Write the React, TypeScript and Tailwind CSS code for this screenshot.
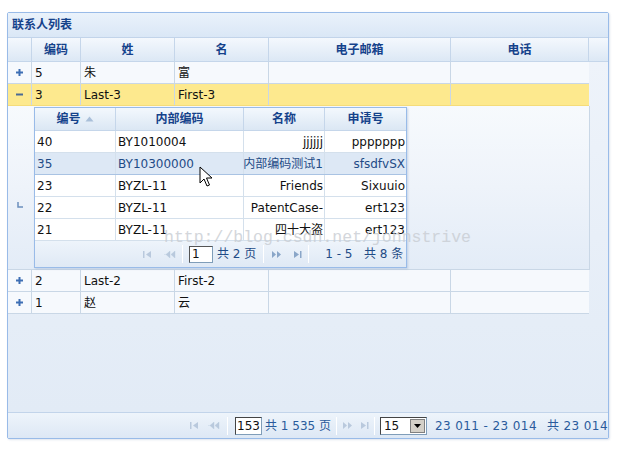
import React from 'react';

const FONT = { fontFamily: '"DejaVu Sans", Verdana, "Noto Sans CJK SC", sans-serif' };

const COLS = [24, 49, 94, 94, 182, 138];
const HEAD = ['', '编码', '姓', '名', '电子邮箱', '电话'];

const SUB_COLS = [81, 128, 81, 81];
const SUB_ROWS = [
  ['40', 'BY1010004', 'jjjjjj', 'ppppppp'],
  ['35', 'BY10300000', '内部编码测试1', 'sfsdfvSX'],
  ['23', 'BYZL-11', 'Friends', 'Sixuuio'],
  ['22', 'BYZL-11', 'PatentCase-', 'ert123'],
  ['21', 'BYZL-11', '四十大盗', 'ert123'],
];

function Plus() {
  return (
    <svg width="9" height="9" viewBox="0 0 9 9">
      <path d="M4.5 1v7M1 4.5h7" stroke="#3d6eb4" strokeWidth="2" />
    </svg>
  );
}

function Minus() {
  return (
    <svg width="9" height="9" viewBox="0 0 9 9">
      <path d="M1 4.5h7" stroke="#4a6a94" strokeWidth="2" />
    </svg>
  );
}

function NavIcons({ dir, faded, gap }: { dir: 'first' | 'last'; faded?: boolean; gap: string }) {
  const c = faded ? '#b9c9dd' : '#8aa6c8';
  return dir === 'first' ? (
    <div className={`flex items-center ${gap}`}>
      <svg width="9" height="7" viewBox="0 0 9 7">
        <rect x="0" y="0" width="1.5" height="7" fill={c} />
        <path d="M8 0v7L3 3.5z" fill={c} />
      </svg>
      <svg width="12" height="7" viewBox="0 0 12 7">
        <path d="M0 3.5h4M6 0v7L2 3.5zM11 0v7L7 3.5z" fill={c} stroke={c} strokeWidth="0.4" />
      </svg>
    </div>
  ) : (
    <div className={`flex items-center ${gap}`}>
      <svg width="12" height="7" viewBox="0 0 12 7">
        <path d="M1 0v7l4-3.5zM6 0v7l4-3.5z" fill={c} />
      </svg>
      <svg width="9" height="7" viewBox="0 0 9 7">
        <path d="M1 0v7l5-3.5z" fill={c} />
        <rect x="7" y="0" width="1.5" height="7" fill={c} />
      </svg>
    </div>
  );
}

function Sep({ m }: { m: string }) {
  return <div className={`w-px h-[18px] bg-[#c9d6e6] border-r border-white shrink-0 ${m}`} />;
}

function HeaderCell({ w, text, last }: { w: number; text: string; last?: boolean }) {
  return (
    <div
      className={`h-full flex items-center justify-center shrink-0 font-bold text-[12px] text-[#15428b] ${last ? '' : 'border-r border-[#c5d6ea]'}`}
      style={{ width: w }}
    >
      {text}
    </div>
  );
}

function OuterRow({ cells, exp, hi }: { cells: string[]; exp: 'plus' | 'minus'; hi?: boolean }) {
  return (
    <div
      className={`flex h-[22px] border-b ${hi ? 'bg-[#fde98e] border-[#f5dc7a]' : 'bg-[#f6f9fd] border-[#c9d7e6]'}`}
      style={{ width: 581 }}
    >
      <div className="flex items-center justify-center shrink-0 border-r border-[#c9d7e6]" style={{ width: COLS[0] }}>
        {exp === 'plus' ? <Plus /> : <Minus />}
      </div>
      {COLS.slice(1).map((w, i) => (
        <div
          key={i}
          className={`flex items-center px-[3px] text-[12px] text-[#111] shrink-0 ${i < 4 ? 'border-r border-[#c9d7e6]' : ''}`}
          style={{ width: w }}
        >
          {cells[i] ?? ''}
        </div>
      ))}
    </div>
  );
}

function SubGrid() {
  return (
    <div className="w-[373px] h-[161px] border border-[#99bbe8] bg-[#f8fafd] flex flex-col shadow-[1px_1px_2px_rgba(120,150,190,0.35)]">
      <div className="flex h-[23px] bg-gradient-to-b from-[#f3f8fd] to-[#dbe7f4] border-b border-[#c5d6ea]">
        {['编号', '内部编码', '名称', '申请号'].map((t, i) => (
          <div
            key={i}
            className={`flex items-center justify-center shrink-0 font-bold text-[12px] text-[#15428b] ${i < 3 ? 'border-r border-[#c5d6ea]' : ''}`}
            style={{ width: SUB_COLS[i] }}
          >
            {t}
            {i === 0 && (
              <svg width="9" height="6" viewBox="0 0 9 6" className="ml-[4px]">
                <path d="M0.5 5.5L4.5 0.5L8.5 5.5z" fill="#a9bfd9" />
              </svg>
            )}
          </div>
        ))}
      </div>
      {SUB_ROWS.map((r, ri) => {
        const sel = ri === 1;
        return (
          <div
            key={ri}
            className={`flex h-[22px] border-b ${sel ? 'bg-[#dde8f5] border-[#a9c3e3] text-[#1f4b86]' : 'bg-white border-[#d4e0ec] text-[#111]'}`}
          >
            {r.map((c, ci) => (
              <div
                key={ci}
                className={`flex items-center text-[12px] shrink-0 whitespace-nowrap overflow-hidden ${ci >= 2 ? 'justify-end pl-0 pr-[1px]' : 'px-[2px]'} ${ci < 3 ? 'border-r border-[#d4e0ec]' : ''}`}
                style={{ width: SUB_COLS[ci] }}
              >
                {c}
              </div>
            ))}
          </div>
        );
      })}
      <div className="flex-1 flex items-center bg-gradient-to-b from-[#eef4fb] to-[#dfe9f5] pl-[108px] text-[12px] text-[#1f4b86] whitespace-nowrap">
        <NavIcons dir="first" faded gap="gap-[12px]" />
        <Sep m="mx-[6px]" />
        <div className="w-[24px] h-[17px] border border-[#7f9db9] border-t-[#555] border-l-[#555] bg-white text-[#111] text-[12px] leading-[15px] pl-[2px]">1</div>
        <span className="ml-[4px]">共 2 页</span>
        <Sep m="mx-[7px]" />
        <NavIcons dir="last" gap="gap-[10px]" />
        <Sep m="mx-[6px]" />
        <span className="ml-[10px]">1 - 5&nbsp;&nbsp; 共 8 条</span>
      </div>
    </div>
  );
}

function Cursor() {
  return (
    <svg width="14" height="21" viewBox="0 0 14 21" className="absolute left-[199px] top-[166px]">
      <path
        d="M1 1v16l4-4 3 7 2.5-1-3-7h5.5z"
        fill="#fff"
        stroke="#000"
        strokeWidth="1"
        strokeLinejoin="miter"
      />
    </svg>
  );
}

export default function App() {
  return (
    <div className="w-[621px] h-[453px] bg-white relative overflow-hidden" style={FONT}>
      <div className="absolute left-[7px] top-[12px] w-[602px] h-[427px] border border-[#99bbe8] rounded-[2px] flex flex-col bg-[#e7eef8] shadow-[1px_1px_2px_rgba(150,170,200,0.3)]">
        {/* title */}
        <div className="h-[25px] shrink-0 flex items-center pl-[4px] bg-gradient-to-b from-[#eaf2fb] to-[#dae7f6] border-b border-[#c2d4ea] font-bold text-[12px] text-[#15428b]">
          联系人列表
        </div>
        {/* header */}
        <div className="h-[24px] shrink-0 flex bg-gradient-to-b from-[#f4f8fd] to-[#dce8f5] border-b border-[#c5d6ea]">
          {HEAD.map((h, i) => (
            <HeaderCell key={i} w={COLS[i]} text={h} />
          ))}
        </div>
        {/* body */}
        <div className="flex-1 bg-gradient-to-b from-[#eef3fa] to-[#e2ebf6] overflow-hidden">
          <OuterRow cells={['5', '朱', '富', '', '']} exp="plus" />
          <OuterRow cells={['3', 'Last-3', 'First-3', '', '']} exp="minus" hi />
          <div
            className="flex h-[164px] border-b border-[#c9d7e6] bg-gradient-to-b from-[#f7fafd] via-[#eef3fa] to-[#e3ecf7] border-r"
            style={{ width: 582 }}
          >
            <div className="shrink-0 flex justify-center pt-[96px]" style={{ width: COLS[0] }}>
              <svg width="6" height="6" viewBox="0 0 6 6">
                <path d="M1 0v5h5" stroke="#6b8fbd" strokeWidth="1.5" fill="none" />
              </svg>
            </div>
            <div className="pt-[1px] pl-[2px]">
              <SubGrid />
            </div>
          </div>
          <OuterRow cells={['2', 'Last-2', 'First-2', '', '']} exp="plus" />
          <OuterRow cells={['1', '赵', '云', '', '']} exp="plus" />
        </div>
        {/* pager */}
        <div className="h-[26px] shrink-0 flex items-center border-t border-[#c2d4ea] bg-gradient-to-b from-[#eef4fb] to-[#dde8f5] pl-[182px] text-[12px] text-[#2a5b9c] whitespace-nowrap overflow-hidden">
          <NavIcons dir="first" faded gap="gap-[9px]" />
          <Sep m="mx-[7px]" />
          <div className="w-[27px] h-[18px] border border-[#7f9db9] border-t-[#444] border-l-[#444] bg-white text-[#111] text-[12px] leading-[16px] pl-[1px] shrink-0">153</div>
          <span className="ml-[3px]">共 1 535 页</span>
          <Sep m="mx-[5px]" />
          <NavIcons dir="last" faded gap="gap-[6px]" />
          <Sep m="mx-[5px]" />
          <div className="w-[47px] h-[18px] border border-[#7f9db9] border-t-[#444] border-l-[#444] bg-white flex items-center shrink-0">
            <span className="flex-1 text-[#111] pl-[3px] leading-[16px]">15</span>
            <div className="w-[15px] h-[14px] mr-[1px] bg-[#d4d0c8] border border-[#808080] flex items-center justify-center">
              <svg width="7" height="4" viewBox="0 0 7 4">
                <path d="M0 0h7L3.5 4z" fill="#000" />
              </svg>
            </div>
          </div>
          <span className="ml-[8px] tracking-[0.4px]">23 011 - 23 014</span>
          <span className="ml-[10px] tracking-[0.4px]">共 23 014 条</span>
        </div>
      </div>
      {/* watermark */}
      <div
        className="absolute left-[164px] top-[226px] text-[16.5px] text-[#c9cdd3] whitespace-nowrap pointer-events-none opacity-80"
        style={{ fontFamily: '"Liberation Mono", monospace' }}
      >
        http://blog.csdn.net/johnstrive
      </div>
      <Cursor />
    </div>
  );
}
